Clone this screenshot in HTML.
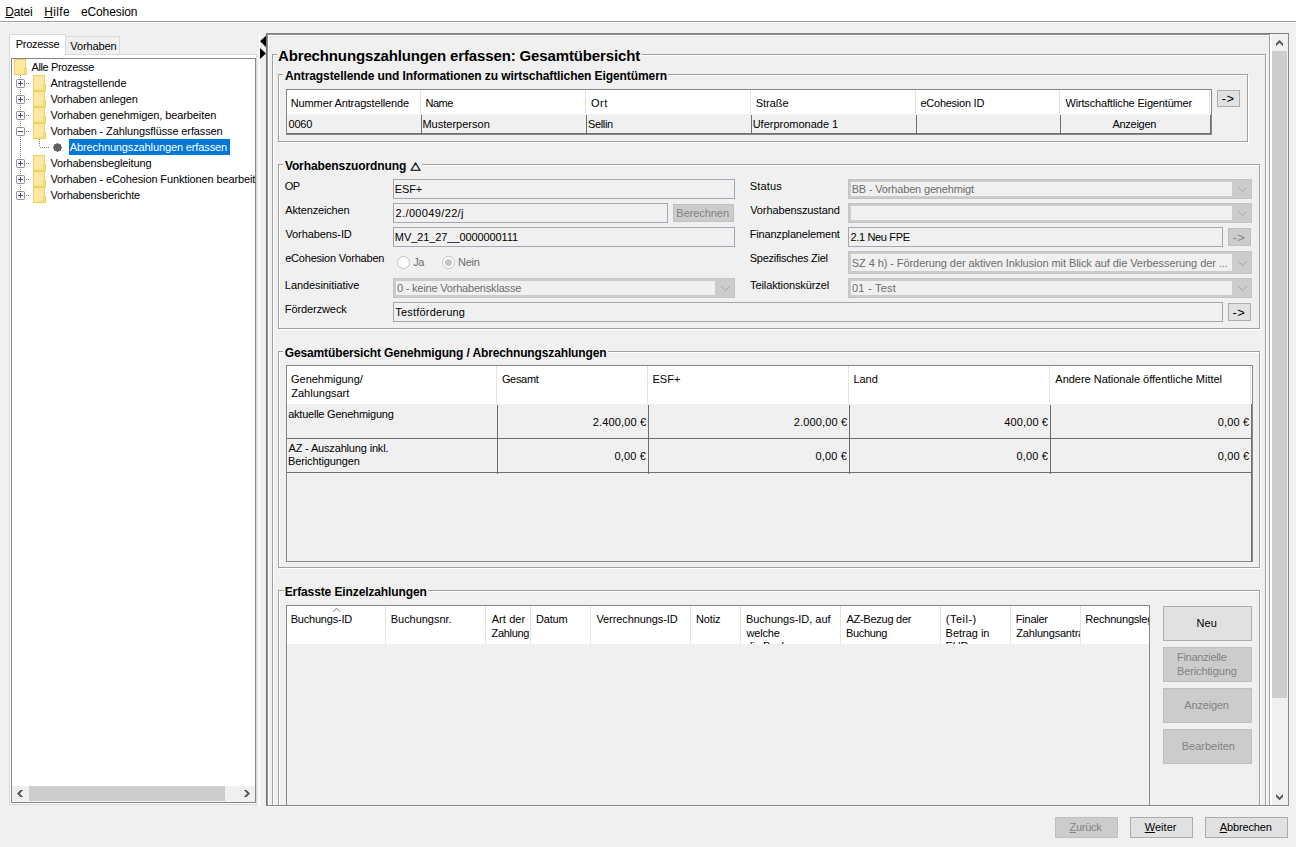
<!DOCTYPE html><html lang="de"><head><meta charset="utf-8"><title>Abrechnungszahlungen erfassen</title><style>
*{box-sizing:border-box;margin:0;padding:0}
html,body{width:1296px;height:847px;overflow:hidden;background:#f0f0f0}
body{position:relative;font-family:"Liberation Sans",sans-serif;font-size:11px;color:#000}
.a{position:absolute}
.t{position:absolute;white-space:nowrap;line-height:16px;height:16px}
u{text-decoration:underline;text-underline-offset:1px}
.gt{position:absolute;height:16px;background:#f0f0f0}
.eg{position:absolute;border:1px solid #a0a0a0}
.ew{position:absolute;border:1px solid #fff}
.fld{position:absolute;border:1px solid #a2a7b3;background:#f0f0f0}
.cmb{position:absolute;border:3px solid #cccccc;background:#f0f0f0;outline:1px solid #c4c4c4;outline-offset:-1px}
.cmb i{position:absolute;right:0;top:0;bottom:0;width:17px;background:#ccc}
.btn{position:absolute;border:1px solid #adadad;background:#e1e1e1}
.btn.d{border-color:#bfbfbf;background:#cccccc}
.hd{position:absolute;background:#fff}
.vs{position:absolute;width:1px;background:#e5e5e5}
.gl{position:absolute;background:#6e6e6e}
.clip{position:absolute;overflow:hidden}
</style></head><body>
<div class="a" style="left:0;top:0;width:1296px;height:21px;background:#fff"></div>
<div class="a" style="left:0;top:21px;width:1296px;height:1px;background:#a0a0a0"></div>
<div class="a" style="left:0;top:22px;width:1296px;height:1px;background:#fff"></div>
<div class="t" style="left:5.20px;top:4.00px;letter-spacing:-0.138px;font-size:12px;"><u>D</u>atei</div>
<div class="t" style="left:44.20px;top:4.00px;letter-spacing:0.365px;font-size:12px;"><u>H</u>ilfe</div>
<div class="t" style="left:80.92px;top:4.00px;letter-spacing:-0.099px;font-size:12px;">eCohesion</div>
<div class="a" style="left:9px;top:54px;width:248px;height:751px;border:1px solid #d9d9d9;background:#fff"></div>
<div class="a" style="left:65px;top:36px;width:55px;height:19px;border:1px solid #d9d9d9;background:#f0f0f0"></div>
<div class="a" style="left:9px;top:34px;width:57px;height:21px;border:1px solid #d9d9d9;border-bottom:0;background:#fff"></div>
<div class="t" style="left:15.67px;top:36.00px;letter-spacing:-0.256px;">Prozesse</div>
<div class="t" style="left:70.31px;top:38.00px;letter-spacing:-0.116px;">Vorhaben</div>
<div class="a" style="left:11px;top:58px;width:245px;height:745px;border:1px solid #828790;background:#fff"></div>
<div class="clip" style="left:12px;top:59px;width:243px;height:727px">
<div class="a" style="left:8px;top:16px;width:1px;height:120px;background-image:linear-gradient(to bottom,#808080 50%,transparent 50%);background-size:1px 2px"></div>
<svg class="a" style="left:2px;top:0px" width="13" height="16" viewBox="0 0 13 16"><rect x="0.5" y="0.5" width="11" height="15" fill="#ffe8a0" stroke="#f2cd5f"/><rect x="10.5" y="9.5" width="2" height="6" fill="#ffe8a0" stroke="#f2cd5f"/></svg>
<div class="t" style="left:19.47px;top:-0.30px;letter-spacing:-0.366px;">Alle Prozesse</div>
<div class="a" style="left:14px;top:24px;width:4px;height:1px;background-image:linear-gradient(to right,#808080 50%,transparent 50%);background-size:2px 1px"></div>
<svg class="a" style="left:4px;top:20px" width="9" height="9" viewBox="0 0 9 9"><rect x="0.5" y="0.5" width="8" height="8" rx="1" fill="#fbfbfb" stroke="#919191"/><rect x="2" y="4" width="5" height="1" fill="#3a4bb0"/><rect x="4" y="2" width="1" height="5" fill="#3a4bb0"/></svg>
<svg class="a" style="left:21px;top:16px" width="13" height="16" viewBox="0 0 13 16"><rect x="0.5" y="0.5" width="11" height="15" fill="#ffe8a0" stroke="#f2cd5f"/><rect x="10.5" y="9.5" width="2" height="6" fill="#ffe8a0" stroke="#f2cd5f"/></svg>
<div class="t" style="left:38.47px;top:15.70px;letter-spacing:-0.028px;">Antragstellende</div>
<div class="a" style="left:14px;top:40px;width:4px;height:1px;background-image:linear-gradient(to right,#808080 50%,transparent 50%);background-size:2px 1px"></div>
<svg class="a" style="left:4px;top:36px" width="9" height="9" viewBox="0 0 9 9"><rect x="0.5" y="0.5" width="8" height="8" rx="1" fill="#fbfbfb" stroke="#919191"/><rect x="2" y="4" width="5" height="1" fill="#3a4bb0"/><rect x="4" y="2" width="1" height="5" fill="#3a4bb0"/></svg>
<svg class="a" style="left:21px;top:32px" width="13" height="16" viewBox="0 0 13 16"><rect x="0.5" y="0.5" width="11" height="15" fill="#ffe8a0" stroke="#f2cd5f"/><rect x="10.5" y="9.5" width="2" height="6" fill="#ffe8a0" stroke="#f2cd5f"/></svg>
<div class="t" style="left:38.51px;top:31.70px;letter-spacing:-0.135px;">Vorhaben anlegen</div>
<div class="a" style="left:14px;top:56px;width:4px;height:1px;background-image:linear-gradient(to right,#808080 50%,transparent 50%);background-size:2px 1px"></div>
<svg class="a" style="left:4px;top:52px" width="9" height="9" viewBox="0 0 9 9"><rect x="0.5" y="0.5" width="8" height="8" rx="1" fill="#fbfbfb" stroke="#919191"/><rect x="2" y="4" width="5" height="1" fill="#3a4bb0"/><rect x="4" y="2" width="1" height="5" fill="#3a4bb0"/></svg>
<svg class="a" style="left:21px;top:48px" width="13" height="16" viewBox="0 0 13 16"><rect x="0.5" y="0.5" width="11" height="15" fill="#ffe8a0" stroke="#f2cd5f"/><rect x="10.5" y="9.5" width="2" height="6" fill="#ffe8a0" stroke="#f2cd5f"/></svg>
<div class="t" style="left:38.51px;top:47.70px;letter-spacing:-0.100px;">Vorhaben genehmigen, bearbeiten</div>
<div class="a" style="left:14px;top:72px;width:4px;height:1px;background-image:linear-gradient(to right,#808080 50%,transparent 50%);background-size:2px 1px"></div>
<svg class="a" style="left:4px;top:68px" width="9" height="9" viewBox="0 0 9 9"><rect x="0.5" y="0.5" width="8" height="8" rx="1" fill="#fbfbfb" stroke="#919191"/><rect x="2" y="4" width="5" height="1" fill="#3a4bb0"/></svg>
<svg class="a" style="left:21px;top:64px" width="13" height="16" viewBox="0 0 13 16"><rect x="0.5" y="0.5" width="11" height="15" fill="#ffe8a0" stroke="#f2cd5f"/><rect x="10.5" y="9.5" width="2" height="6" fill="#ffe8a0" stroke="#f2cd5f"/></svg>
<div class="t" style="left:38.47px;top:63.70px;letter-spacing:-0.117px;">Vorhaben - Zahlungsflüsse erfassen</div>
<div class="a" style="left:27px;top:80px;width:1px;height:8px;background-image:linear-gradient(to bottom,#808080 50%,transparent 50%);background-size:1px 2px"></div>
<div class="a" style="left:28px;top:88px;width:9px;height:1px;background-image:linear-gradient(to right,#808080 50%,transparent 50%);background-size:2px 1px"></div>
<svg class="a" style="left:41px;top:84px" width="9" height="9" viewBox="0 0 9 9"><polygon points="9.20,4.50 8.10,5.99 7.82,7.82 5.99,8.10 4.50,9.20 3.01,8.10 1.18,7.82 0.90,5.99 -0.20,4.50 0.90,3.01 1.18,1.18 3.01,0.90 4.50,-0.20 5.99,0.90 7.82,1.18 8.10,3.01" fill="#616161"/></svg>
<div class="a" style="left:57px;top:80px;width:161px;height:16px;background:#0078d7"></div>
<div class="t" style="left:57.77px;top:79.70px;letter-spacing:-0.123px;color:#fff;">Abrechnungszahlungen erfassen</div>
<div class="a" style="left:14px;top:104px;width:4px;height:1px;background-image:linear-gradient(to right,#808080 50%,transparent 50%);background-size:2px 1px"></div>
<svg class="a" style="left:4px;top:100px" width="9" height="9" viewBox="0 0 9 9"><rect x="0.5" y="0.5" width="8" height="8" rx="1" fill="#fbfbfb" stroke="#919191"/><rect x="2" y="4" width="5" height="1" fill="#3a4bb0"/><rect x="4" y="2" width="1" height="5" fill="#3a4bb0"/></svg>
<svg class="a" style="left:21px;top:96px" width="13" height="16" viewBox="0 0 13 16"><rect x="0.5" y="0.5" width="11" height="15" fill="#ffe8a0" stroke="#f2cd5f"/><rect x="10.5" y="9.5" width="2" height="6" fill="#ffe8a0" stroke="#f2cd5f"/></svg>
<div class="t" style="left:38.47px;top:95.70px;letter-spacing:-0.121px;">Vorhabensbegleitung</div>
<div class="a" style="left:14px;top:120px;width:4px;height:1px;background-image:linear-gradient(to right,#808080 50%,transparent 50%);background-size:2px 1px"></div>
<svg class="a" style="left:4px;top:116px" width="9" height="9" viewBox="0 0 9 9"><rect x="0.5" y="0.5" width="8" height="8" rx="1" fill="#fbfbfb" stroke="#919191"/><rect x="2" y="4" width="5" height="1" fill="#3a4bb0"/><rect x="4" y="2" width="1" height="5" fill="#3a4bb0"/></svg>
<svg class="a" style="left:21px;top:112px" width="13" height="16" viewBox="0 0 13 16"><rect x="0.5" y="0.5" width="11" height="15" fill="#ffe8a0" stroke="#f2cd5f"/><rect x="10.5" y="9.5" width="2" height="6" fill="#ffe8a0" stroke="#f2cd5f"/></svg>
<div class="t" style="left:38.45px;top:111.70px;letter-spacing:-0.125px;">Vorhaben - eCohesion Funktionen bearbeiten</div>
<div class="a" style="left:14px;top:136px;width:4px;height:1px;background-image:linear-gradient(to right,#808080 50%,transparent 50%);background-size:2px 1px"></div>
<svg class="a" style="left:4px;top:132px" width="9" height="9" viewBox="0 0 9 9"><rect x="0.5" y="0.5" width="8" height="8" rx="1" fill="#fbfbfb" stroke="#919191"/><rect x="2" y="4" width="5" height="1" fill="#3a4bb0"/><rect x="4" y="2" width="1" height="5" fill="#3a4bb0"/></svg>
<svg class="a" style="left:21px;top:128px" width="13" height="16" viewBox="0 0 13 16"><rect x="0.5" y="0.5" width="11" height="15" fill="#ffe8a0" stroke="#f2cd5f"/><rect x="10.5" y="9.5" width="2" height="6" fill="#ffe8a0" stroke="#f2cd5f"/></svg>
<div class="t" style="left:38.51px;top:127.70px;letter-spacing:-0.128px;">Vorhabensberichte</div>
</div>
<div class="a" style="left:12px;top:786px;width:243px;height:16px;background:#f0f0f0"></div>
<div class="a" style="left:29px;top:786px;width:196px;height:15px;background:#cdcdcd"></div>
<svg class="a" style="left:12px;top:786px" width="17" height="16" viewBox="0 0 17 16"><path d="M5 7.5 L8.5 4 L11.2 4 L7.7 7.5 L11.2 11 L8.5 11 Z" fill="#555"/></svg>
<svg class="a" style="left:238px;top:786px" width="17" height="16" viewBox="0 0 17 16"><path d="M5.8 4 L8.5 4 L12 7.5 L8.5 11 L5.8 11 L9.3 7.5 Z" fill="#555"/></svg>
<div class="a" style="left:259px;top:33px;width:1px;height:773px;background:#fff"></div>
<svg class="a" style="left:260px;top:35px" width="6" height="25" viewBox="0 0 6 25"><path d="M6 0.7 L0 6.3 L6 11.9 Z" fill="#000"/><path d="M0 13 L6 18.5 L0 24 Z" fill="#000"/></svg>
<div class="a" style="left:266px;top:33px;width:1023px;height:773px;border:1px solid #828790;border-left-color:#70747b;border-top-color:#787d86"></div>
<div class="a" style="left:267px;top:34px;width:1002px;height:771px;border-left:1px solid #8f939b;border-top:1px solid #949494"></div>
<div class="a" style="left:268px;top:35px;width:1px;height:770px;background:#fff"></div>
<div class="a" style="left:268px;top:35px;width:1001px;height:1px;background:#fff"></div>
<div class="a" style="left:266px;top:806px;width:1023px;height:1px;background:#f8f8f8"></div>
<div class="a" style="left:1269px;top:34px;width:1px;height:771px;background:#a0a0a0"></div>
<div class="a" style="left:1270px;top:34px;width:2px;height:771px;background:#fff"></div>
<div class="a" style="left:1272px;top:51px;width:15px;height:647px;background:#cdcdcd"></div>
<svg class="a" style="left:1271px;top:35px" width="17" height="17" viewBox="0 0 17 17"><path d="M5 8.5 L8.5 5 L12 8.5 L12 11.2 L8.5 7.7 L5 11.2 Z" fill="#555"/></svg>
<svg class="a" style="left:1271px;top:788px" width="17" height="17" viewBox="0 0 17 17"><path d="M5 6 L8.5 9.5 L12 6 L12 8.7 L8.5 12.2 L5 8.7 Z" fill="#555"/></svg>
<div class="clip" style="left:269px;top:36px;width:1000px;height:769px">
<div class="ew" style="left:4px;top:19px;width:994px;height:846px"></div>
<div class="eg" style="left:3px;top:18px;width:994px;height:846px"></div>
<div class="gt" style="left:8px;top:11px;width:365px"></div>
<div class="t" style="left:9.00px;top:9.50px;letter-spacing:-0.139px;font-size:15px;line-height:20px;height:20px;font-weight:bold;">Abrechnungszahlungen erfassen: Gesamtübersicht</div>
<div class="ew" style="left:10px;top:39px;width:970px;height:68px"></div>
<div class="eg" style="left:9px;top:38px;width:970px;height:68px"></div>
<div class="gt" style="left:14px;top:31px;width:385px"></div>
<div class="t" style="left:15.90px;top:32.00px;letter-spacing:-0.081px;font-size:12px;font-weight:bold;">Antragstellende und Informationen zu wirtschaftlichen Eigentümern</div>
<div class="ew" style="left:10px;top:129px;width:982px;height:165px"></div>
<div class="eg" style="left:9px;top:128px;width:982px;height:165px"></div>
<div class="gt" style="left:14px;top:121px;width:139px"></div>
<div class="t" style="left:15.88px;top:122.00px;letter-spacing:-0.097px;font-size:12px;font-weight:bold;">Vorhabenszuordnung</div>
<div class="t" style="left:141.60000000000002px;top:120.6px;font-family:'DejaVu Sans',sans-serif;font-size:13px;-webkit-text-stroke:0.45px #000;transform:scaleY(0.82);transform-origin:0 12.5px">&#9651;</div>
<div class="ew" style="left:10px;top:316px;width:982px;height:217px"></div>
<div class="eg" style="left:9px;top:315px;width:982px;height:217px"></div>
<div class="gt" style="left:14px;top:308px;width:325px"></div>
<div class="t" style="left:15.76px;top:309.00px;letter-spacing:-0.131px;font-size:12px;font-weight:bold;">Gesamtübersicht Genehmigung / Abrechnungszahlungen</div>
<div class="ew" style="left:10px;top:555px;width:982px;height:290px"></div>
<div class="eg" style="left:9px;top:554px;width:982px;height:290px"></div>
<div class="gt" style="left:15px;top:547px;width:144px"></div>
<div class="t" style="left:15.73px;top:548.00px;letter-spacing:-0.112px;font-size:12px;font-weight:bold;">Erfasste Einzelzahlungen</div>
<div class="a" style="left:17px;top:53px;width:926px;height:46px;border:1px solid #828790"></div>
<div class="hd" style="left:18px;top:54px;width:924px;height:24px"></div>
<div class="vs" style="left:151px;top:54px;height:24px"></div>
<div class="gl" style="left:152px;top:79px;width:1px;height:19px"></div>
<div class="vs" style="left:316px;top:54px;height:24px"></div>
<div class="gl" style="left:317px;top:79px;width:1px;height:19px"></div>
<div class="vs" style="left:481px;top:54px;height:24px"></div>
<div class="gl" style="left:482px;top:79px;width:1px;height:19px"></div>
<div class="vs" style="left:646px;top:54px;height:24px"></div>
<div class="gl" style="left:647px;top:79px;width:1px;height:19px"></div>
<div class="vs" style="left:790px;top:54px;height:24px"></div>
<div class="gl" style="left:791px;top:79px;width:1px;height:19px"></div>
<div class="vs" style="left:940px;top:54px;height:24px"></div>
<div class="gl" style="left:941px;top:79px;width:1px;height:19px"></div>
<div class="gl" style="left:18px;top:97px;width:924px;height:1px"></div>
<div class="t" style="left:21.77px;top:59.00px;letter-spacing:-0.129px;">Nummer Antragstellende</div>
<div class="t" style="left:156.43px;top:59.00px;letter-spacing:-0.440px;">Name</div>
<div class="t" style="left:321.96px;top:59.00px;letter-spacing:0.500px;">Ort</div>
<div class="t" style="left:486.77px;top:59.00px;letter-spacing:-0.036px;">Straße</div>
<div class="t" style="left:651.45px;top:59.00px;letter-spacing:-0.247px;">eCohesion ID</div>
<div class="t" style="left:796.47px;top:59.00px;letter-spacing:-0.162px;">Wirtschaftliche Eigentümer</div>
<div class="t" style="left:19.54px;top:79.60px;letter-spacing:-0.200px;">0060</div>
<div class="t" style="left:153.43px;top:79.60px;letter-spacing:0.012px;">Musterperson</div>
<div class="t" style="left:319.02px;top:79.60px;letter-spacing:-0.362px;">Sellin</div>
<div class="t" style="left:483.70px;top:79.60px;letter-spacing:-0.009px;">Uferpromonade 1</div>
<div class="t" style="left:843.47px;top:79.60px;letter-spacing:-0.279px;">Anzeigen</div>
<div class="btn" style="left:948px;top:54px;width:23px;height:17px"></div>
<div class="t" style="left:952.78px;top:54.50px;letter-spacing:0.500px;font-size:13px;">-&gt;</div>
<div class="t" style="left:15.70px;top:142.00px;letter-spacing:-0.600px;">OP</div>
<div class="t" style="left:16.37px;top:166.00px;letter-spacing:-0.167px;">Aktenzeichen</div>
<div class="t" style="left:16.38px;top:190.00px;letter-spacing:-0.075px;">Vorhabens-ID</div>
<div class="t" style="left:16.16px;top:214.00px;letter-spacing:-0.204px;">eCohesion Vorhaben</div>
<div class="t" style="left:15.87px;top:241.00px;letter-spacing:-0.087px;">Landesinitiative</div>
<div class="t" style="left:15.87px;top:264.60px;letter-spacing:-0.104px;">Förderzweck</div>
<div class="t" style="left:480.77px;top:142.00px;letter-spacing:0.160px;">Status</div>
<div class="t" style="left:481.18px;top:166.00px;letter-spacing:-0.097px;">Vorhabenszustand</div>
<div class="t" style="left:480.67px;top:190.00px;letter-spacing:-0.169px;">Finanzplanelement</div>
<div class="t" style="left:480.77px;top:214.00px;letter-spacing:-0.268px;">Spezifisches Ziel</div>
<div class="t" style="left:481.01px;top:241.00px;letter-spacing:-0.091px;">Teilaktionskürzel</div>
<div class="fld" style="left:124px;top:143px;width:342px;height:20px"></div>
<div class="t" style="left:125.87px;top:145.00px;letter-spacing:-0.140px;">ESF+</div>
<div class="fld" style="left:124px;top:167px;width:275px;height:20px"></div>
<div class="t" style="left:126.60px;top:169.00px;letter-spacing:0.355px;">2./00049/22/j</div>
<div class="btn d" style="left:404px;top:168px;width:61px;height:18px"></div>
<div class="t" style="left:407.37px;top:169.00px;letter-spacing:-0.066px;color:#838383;">Berechnen</div>
<div class="fld" style="left:124px;top:191px;width:342px;height:20px"></div>
<div class="t" style="left:125.87px;top:193.00px;letter-spacing:-0.089px;">MV_21_27__0000000111</div>
<svg class="a" style="left:127.5px;top:220px" width="13" height="13" viewBox="0 0 13 13"><circle cx="6.5" cy="6.5" r="6" fill="#fff" stroke="#c2c2c2"/></svg>
<div class="t" style="left:144.33px;top:217.60px;letter-spacing:-0.600px;color:#6d6d6d;">Ja</div>
<svg class="a" style="left:172.8px;top:220px" width="13" height="13" viewBox="0 0 13 13"><circle cx="6.5" cy="6.5" r="6" fill="#fff" stroke="#c2c2c2"/><circle cx="6.5" cy="6.5" r="3.6" fill="#c6c6c6"/></svg>
<div class="t" style="left:188.88px;top:217.60px;letter-spacing:-0.187px;color:#6d6d6d;">Nein</div>
<div class="cmb" style="left:124px;top:242px;width:342px;height:20px"><i></i><svg class="a" style="right:1px;top:0.0px" width="11" height="14" viewBox="0 0 11 14"><path d="M1.5 5.5 L5.5 9.5 L9.5 5.5" fill="none" stroke="#a6a6a6" stroke-width="1"/></svg></div>
<div class="t" style="left:127.91px;top:244.00px;letter-spacing:-0.192px;color:#6d6d6d;">0 - keine Vorhabensklasse</div>
<div class="fld" style="left:124px;top:266px;width:830px;height:20px"></div>
<div class="t" style="left:126.21px;top:268.00px;letter-spacing:0.208px;">Testförderung</div>
<div class="btn" style="left:959px;top:267px;width:23px;height:18px"></div>
<div class="t" style="left:963.48px;top:268.50px;letter-spacing:0.500px;font-size:13px;">-&gt;</div>
<div class="cmb" style="left:579px;top:143px;width:404px;height:20px"><i></i><svg class="a" style="right:1px;top:0.0px" width="11" height="14" viewBox="0 0 11 14"><path d="M1.5 5.5 L5.5 9.5 L9.5 5.5" fill="none" stroke="#a6a6a6" stroke-width="1"/></svg></div>
<div class="t" style="left:582.67px;top:145.00px;letter-spacing:-0.164px;color:#6d6d6d;">BB - Vorhaben genehmigt</div>
<div class="cmb" style="left:579px;top:167px;width:404px;height:20px"><i></i><svg class="a" style="right:1px;top:0.0px" width="11" height="14" viewBox="0 0 11 14"><path d="M1.5 5.5 L5.5 9.5 L9.5 5.5" fill="none" stroke="#a6a6a6" stroke-width="1"/></svg></div>
<div class="fld" style="left:579px;top:191px;width:375px;height:20px"></div>
<div class="t" style="left:581.50px;top:193.00px;letter-spacing:-0.350px;">2.1 Neu FPE</div>
<div class="btn d" style="left:959px;top:192px;width:23px;height:18px"></div>
<div class="t" style="left:963.48px;top:193.50px;letter-spacing:0.500px;font-size:13px;color:#838383;">-&gt;</div>
<div class="cmb" style="left:579px;top:215px;width:404px;height:23px"><i></i><svg class="a" style="right:1px;top:1.5px" width="11" height="14" viewBox="0 0 11 14"><path d="M1.5 5.5 L5.5 9.5 L9.5 5.5" fill="none" stroke="#a6a6a6" stroke-width="1"/></svg></div>
<div class="t" style="left:582.76px;top:218.50px;letter-spacing:-0.077px;color:#6d6d6d;">SZ 4 h) - Förderung der aktiven Inklusion mit Blick auf die Verbesserung der ...</div>
<div class="cmb" style="left:579px;top:242px;width:404px;height:20px"><i></i><svg class="a" style="right:1px;top:0.0px" width="11" height="14" viewBox="0 0 11 14"><path d="M1.5 5.5 L5.5 9.5 L9.5 5.5" fill="none" stroke="#a6a6a6" stroke-width="1"/></svg></div>
<div class="t" style="left:582.98px;top:244.00px;letter-spacing:0.246px;color:#6d6d6d;">01 - Test</div>
<div class="a" style="left:17px;top:329px;width:967px;height:197px;border:1px solid #828790"></div>
<div class="hd" style="left:18px;top:330px;width:965px;height:38px"></div>
<div class="vs" style="left:227px;top:330px;height:38px"></div>
<div class="gl" style="left:228px;top:369px;width:1px;height:69px"></div>
<div class="vs" style="left:378px;top:330px;height:38px"></div>
<div class="gl" style="left:379px;top:369px;width:1px;height:69px"></div>
<div class="vs" style="left:579px;top:330px;height:38px"></div>
<div class="gl" style="left:580px;top:369px;width:1px;height:69px"></div>
<div class="vs" style="left:780px;top:330px;height:38px"></div>
<div class="gl" style="left:781px;top:369px;width:1px;height:69px"></div>
<div class="vs" style="left:981px;top:330px;height:38px"></div>
<div class="gl" style="left:982px;top:369px;width:1px;height:69px"></div>
<div class="gl" style="left:982px;top:368px;width:1px;height:157px"></div>
<div class="gl" style="left:18px;top:402px;width:965px;height:1px"></div>
<div class="gl" style="left:18px;top:436px;width:965px;height:1px"></div>
<div class="t" style="left:22.09px;top:335.30px;letter-spacing:-0.042px;">Genehmigung/</div>
<div class="t" style="left:22.30px;top:349.10px;letter-spacing:-0.006px;">Zahlungsart</div>
<div class="t" style="left:232.89px;top:335.30px;letter-spacing:-0.314px;">Gesamt</div>
<div class="t" style="left:383.42px;top:335.30px;letter-spacing:0.043px;">ESF+</div>
<div class="t" style="left:584.49px;top:335.30px;letter-spacing:-0.063px;">Land</div>
<div class="t" style="left:786.37px;top:335.30px;letter-spacing:-0.019px;">Andere Nationale öffentliche Mittel</div>
<div class="t" style="left:19.23px;top:370.00px;letter-spacing:-0.236px;">aktuelle Genehmigung</div>
<div class="t" style="left:19.47px;top:403.80px;letter-spacing:-0.163px;">AZ - Auszahlung inkl.</div>
<div class="t" style="left:18.97px;top:417.40px;letter-spacing:-0.118px;">Berichtigungen</div>
<div class="t" style="left:323.65px;top:378.20px;letter-spacing:0.163px;">2.400,00 €</div>
<div class="t" style="left:524.68px;top:378.20px;letter-spacing:0.156px;">2.000,00 €</div>
<div class="t" style="left:735.37px;top:378.20px;letter-spacing:0.107px;">400,00 €</div>
<div class="t" style="left:948.75px;top:378.20px;letter-spacing:0.152px;">0,00 €</div>
<div class="t" style="left:345.50px;top:412.00px;letter-spacing:0.152px;">0,00 €</div>
<div class="t" style="left:546.50px;top:412.00px;letter-spacing:0.152px;">0,00 €</div>
<div class="t" style="left:747.50px;top:412.00px;letter-spacing:0.152px;">0,00 €</div>
<div class="t" style="left:948.75px;top:412.00px;letter-spacing:0.152px;">0,00 €</div>
<div class="a" style="left:17px;top:569px;width:864px;height:260px;border:1px solid #828790"></div>
<div class="hd" style="left:18px;top:570px;width:862px;height:38px"></div>
<div class="vs" style="left:116px;top:570px;height:38px"></div>
<div class="vs" style="left:216px;top:570px;height:38px"></div>
<div class="vs" style="left:261px;top:570px;height:38px"></div>
<div class="vs" style="left:321px;top:570px;height:38px"></div>
<div class="vs" style="left:421px;top:570px;height:38px"></div>
<div class="vs" style="left:471px;top:570px;height:38px"></div>
<div class="vs" style="left:571px;top:570px;height:38px"></div>
<div class="vs" style="left:671px;top:570px;height:38px"></div>
<div class="vs" style="left:741px;top:570px;height:38px"></div>
<div class="vs" style="left:811px;top:570px;height:38px"></div>
<div class="clip" style="left:18px;top:570px;width:98px;height:38px">
<div class="t" style="left:3.67px;top:4.70px;letter-spacing:-0.202px;">Buchungs-ID</div>
</div>
<div class="clip" style="left:117px;top:570px;width:99px;height:38px">
<div class="t" style="left:4.77px;top:4.70px;letter-spacing:-0.036px;">Buchungsnr.</div>
</div>
<div class="clip" style="left:217px;top:570px;width:44px;height:38px">
<div class="t" style="left:5.67px;top:4.70px;letter-spacing:0.090px;">Art der</div>
<div class="t" style="left:5.61px;top:18.50px;letter-spacing:-0.330px;">Zahlung</div>
</div>
<div class="clip" style="left:262px;top:570px;width:59px;height:38px">
<div class="t" style="left:5.07px;top:4.70px;letter-spacing:-0.190px;">Datum</div>
</div>
<div class="clip" style="left:322px;top:570px;width:99px;height:38px">
<div class="t" style="left:5.46px;top:4.70px;letter-spacing:-0.091px;">Verrechnungs-ID</div>
</div>
<div class="clip" style="left:422px;top:570px;width:49px;height:38px">
<div class="t" style="left:4.92px;top:4.70px;letter-spacing:-0.090px;">Notiz</div>
</div>
<div class="clip" style="left:472px;top:570px;width:99px;height:38px">
<div class="t" style="left:4.92px;top:4.70px;letter-spacing:-0.023px;">Buchungs-ID, auf</div>
<div class="t" style="left:5.51px;top:18.50px;letter-spacing:-0.190px;">welche</div>
<div class="t" style="left:5.17px;top:32.30px;letter-spacing:-0.200px;">die Buchung</div>
</div>
<div class="clip" style="left:572px;top:570px;width:99px;height:38px">
<div class="t" style="left:5.42px;top:4.70px;letter-spacing:-0.255px;">AZ-Bezug der</div>
<div class="t" style="left:4.92px;top:18.50px;letter-spacing:-0.308px;">Buchung</div>
</div>
<div class="clip" style="left:672px;top:570px;width:69px;height:38px">
<div class="t" style="left:4.78px;top:4.70px;letter-spacing:0.500px;">(Teil-)</div>
<div class="t" style="left:4.57px;top:18.50px;letter-spacing:-0.016px;">Betrag in</div>
<div class="t" style="left:4.57px;top:32.30px;letter-spacing:-0.200px;">EUR</div>
</div>
<div class="clip" style="left:742px;top:570px;width:69px;height:38px">
<div class="t" style="left:4.87px;top:4.70px;letter-spacing:-0.250px;">Finaler</div>
<div class="t" style="left:5.31px;top:18.50px;letter-spacing:-0.200px;">Zahlungsantrag</div>
</div>
<div class="clip" style="left:812px;top:570px;width:68px;height:38px">
<div class="t" style="left:4.27px;top:4.70px;letter-spacing:-0.200px;">Rechnungslegung</div>
</div>
<svg class="a" style="left:63px;top:571px" width="9" height="5" viewBox="0 0 9 5"><path d="M1 4.7 L4.5 1.2 L8 4.7" fill="none" stroke="#7a7a7a" stroke-width="1"/></svg>
<div class="btn" style="left:894px;top:570px;width:89px;height:35px"></div>
<div class="t" style="left:927.38px;top:579.00px;letter-spacing:0.120px;">Neu</div>
<div class="btn d" style="left:894px;top:611px;width:89px;height:35px"></div>
<div class="t" style="left:907.97px;top:613.10px;letter-spacing:-0.280px;color:#838383;">Finanzielle</div>
<div class="t" style="left:907.97px;top:627.00px;letter-spacing:-0.121px;color:#838383;">Berichtigung</div>
<div class="btn d" style="left:894px;top:652px;width:89px;height:35px"></div>
<div class="t" style="left:915.37px;top:661.00px;letter-spacing:-0.193px;color:#838383;">Anzeigen</div>
<div class="btn d" style="left:894px;top:693px;width:89px;height:35px"></div>
<div class="t" style="left:912.67px;top:702.00px;letter-spacing:0.008px;color:#838383;">Bearbeiten</div>
</div>
<div class="btn d" style="left:1055px;top:817px;width:63px;height:21px"></div>
<div class="t" style="left:1069.60px;top:819.00px;letter-spacing:-0.298px;color:#838383;"><u>Z</u>urück</div>
<div class="btn" style="left:1130px;top:817px;width:63px;height:21px"></div>
<div class="t" style="left:1144.70px;top:819.00px;letter-spacing:0.034px;"><u>W</u>eiter</div>
<div class="btn" style="left:1205px;top:817px;width:83px;height:21px"></div>
<div class="t" style="left:1219.70px;top:819.00px;letter-spacing:-0.133px;"><u>A</u>bbrechen</div>
</body></html>
